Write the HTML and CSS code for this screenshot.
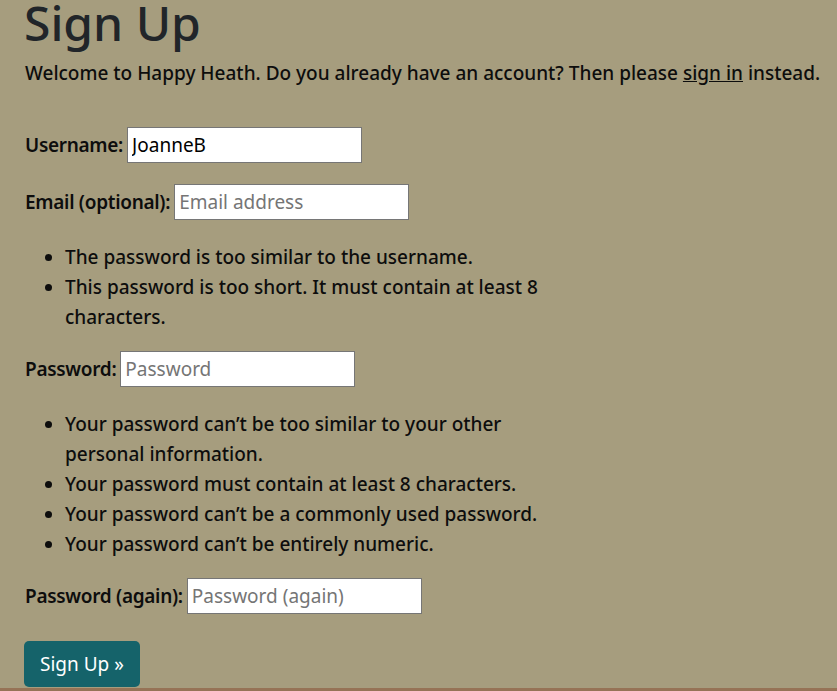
FILE: index.html
```html
<!DOCTYPE html>
<html lang="en">
<head>
<meta charset="utf-8">
<title>Sign Up</title>
<link rel="stylesheet" href="styles.css">
</head>
<body>
<main class="page">
  <h1 class="title">Sign Up</h1>
  <p class="intro">Welcome to Happy Heath. Do you already have an account? Then please <a class="link" href="#">sign in</a> instead.</p>
  <form class="form">
    <div class="row row-user">
      <label class="label" for="u">Username:</label>
      <input class="field" id="u" type="text" value="JoanneB">
    </div>
    <div class="row row-email">
      <label class="label" for="e">Email (optional):</label>
      <input class="field" id="e" type="email" placeholder="Email address">
    </div>
    <ul class="notes notes-errors">
      <li>The password is too similar to the username.</li>
      <li>This password is too short. It must contain at least 8 characters.</li>
    </ul>
    <div class="row row-pass">
      <label class="label" for="p1">Password:</label>
      <input class="field" id="p1" type="password" placeholder="Password">
    </div>
    <ul class="notes notes-help">
      <li>Your password can’t be too similar to your other personal information.</li>
      <li>Your password must contain at least 8 characters.</li>
      <li>Your password can’t be a commonly used password.</li>
      <li>Your password can’t be entirely numeric.</li>
    </ul>
    <div class="row row-pass2">
      <label class="label" for="p2">Password (again):</label>
      <input class="field" id="p2" type="password" placeholder="Password (again)">
    </div>
    <button class="btn" type="button">Sign Up »</button>
  </form>
</main>
<footer class="footer"></footer>
</body>
</html>
```

FILE: styles.css
```css
html, body {
  margin: 0;
  padding: 0;
}
body {
  background: #a69d7e;
  font-family: "Noto Sans", "Open Sans", sans-serif;
  font-size: 19px;
  line-height: 30px;
  color: #0d0d0d;
  height: 691px;
  overflow: hidden;
  display: flex;
  flex-direction: column;
}
.page {
  padding: 0 8px 0 25px;
  flex: 1;
}
.title {
  margin: -7px 0 0 -1px;
  font-size: 48px;
  line-height: 60px;
  font-weight: 500;
  color: #212529;
}
.intro {
  margin: 5px 0 0;
  font-weight: 500;
  white-space: nowrap;
}
.link {
  color: #0d0d0d;
  text-decoration: underline;
}
.form {
  display: flex;
  flex-direction: column;
  align-items: flex-start;
}
.row {
  display: flex;
  align-items: center;
  gap: 4px;
  height: 36px;
}
.label {
  font-weight: 600;
  letter-spacing: -0.3px;
}
.field {
  box-sizing: border-box;
  width: 235px;
  height: 36px;
  margin: 0;
  padding: 0 4px;
  border: 1px solid #767676;
  border-radius: 0;
  background: #fff;
  font-family: inherit;
  font-size: 19px;
  color: #000;
}
.field::placeholder {
  color: #757575;
}
.row-user { margin-top: 39px; }
.row-email { margin-top: 21px; }
.notes {
  margin: 22px 0 0;
  padding-left: 40px;
  width: 490px;
  font-weight: 500;
}
.row-pass { margin-top: 19px; }
.row-pass2 { margin-top: 19px; }
.btn {
  margin: 27px 0 0 -1px;
  height: 46px;
  padding: 0 16px;
  border: none;
  border-radius: 5px;
  background: #15636a;
  color: #fff;
  font-family: inherit;
  font-size: 19px;
  cursor: pointer;
}
.footer {
  height: 4px;
  margin-top: 1px;
  background: #967356;
}
```
